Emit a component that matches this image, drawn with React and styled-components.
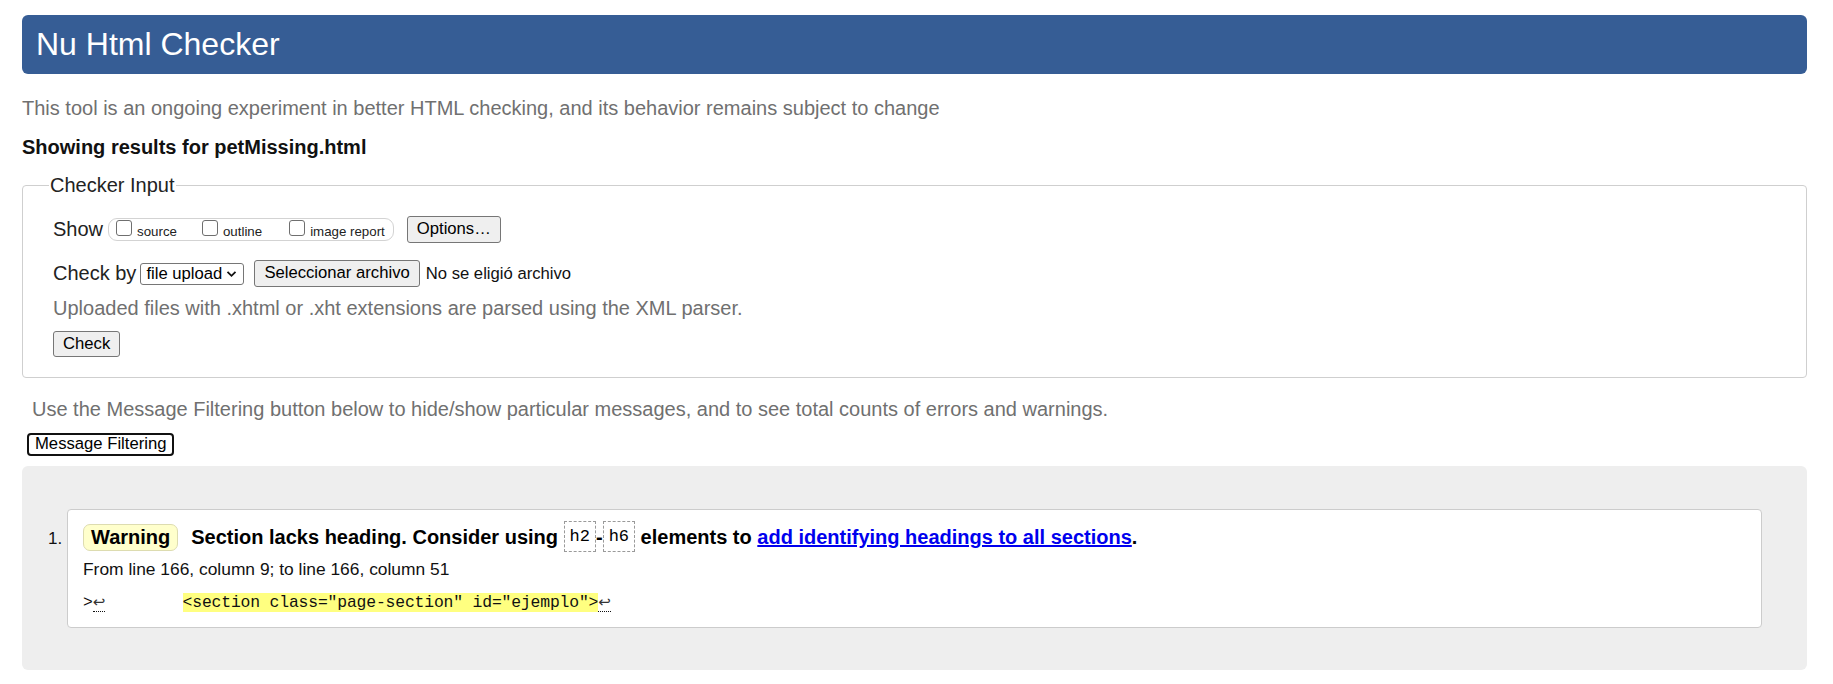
import React from "react";
import styled, { createGlobalStyle } from "styled-components";

const Global = createGlobalStyle`
  html, body { margin: 0; padding: 0; background: #fff; }
  body {
    font-family: "Liberation Sans", Arial, sans-serif;
    color: #222;
  }
  * { box-sizing: border-box; }
`;

const Page = styled.div`
  padding: 15px 26px 15px 22px;
  font-size: 20px;
`;

const Header = styled.h1`
  margin: 0;
  height: 59px;
  line-height: 59px;
  padding: 0 14px;
  background: #365d95;
  color: #fff;
  font-size: 32px;
  font-weight: normal;
  border-radius: 6px;
`;

const Intro = styled.p`
  margin: ${(p) => p.$mt ?? 23}px 0 0;
  color: #707070;
  font-size: 20px;
  line-height: 23px;
  padding-left: ${(p) => p.$indent || 0}px;
`;

const Showing = styled.h2`
  margin: 16px 0 0;
  font-size: 20px;
  line-height: 23px;
  font-weight: bold;
  color: #111;
`;

const Fieldset = styled.fieldset`
  margin: 15px 0 0;
  border: 1px solid #cfcfcf;
  border-radius: 4px;
  padding: 19px 20px 20px 30px;
`;

const Legend = styled.legend`
  font-size: 20px;
  line-height: 23px;
  padding: 0 1px;
  margin-left: -4px;
  color: #222;
`;

const Row = styled.div`
  display: flex;
  align-items: center;
  height: ${(p) => p.$h || 27}px;
  margin-top: ${(p) => p.$mt || 0}px;
`;

const Label = styled.span`
  font-size: 20px;
  color: #222;
  margin-right: ${(p) => p.$mr || 5}px;
`;

const Group = styled.div`
  display: flex;
  align-items: center;
  height: 23px;
  border: 1px solid #d3d3d3;
  border-radius: 9px;
  padding: 0 8px 0 7px;
  margin-right: 13px;
`;

const CheckItem = styled.label`
  display: flex;
  align-items: center;
  font-size: 13.3px;
  color: #222;
  margin-right: ${(p) => p.$mr || 0}px;
  padding-top: 3px;
`;

const Box = styled.span`
  width: 16px;
  height: 16px;
  border: 1px solid #6f6f6f;
  border-radius: 3px;
  background: #fff;
  margin-right: 5px;
  margin-top: -6px;
`;

const Button = styled.button`
  font-family: "Liberation Sans", Arial, sans-serif;
  font-size: 16.67px;
  color: #000;
  height: ${(p) => p.$h || 27}px;
  padding: 0 9px;
  background: #efefef;
  border: 1px solid #767676;
  border-radius: 3px;
  margin-right: ${(p) => p.$mr || 0}px;
  line-height: 1;
`;

const SelectBox = styled.div`
  display: flex;
  align-items: center;
  justify-content: space-between;
  width: 104px;
  height: 22px;
  border: 1px solid #767676;
  border-radius: 3px;
  padding: 0 6px 0 5px;
  font-size: 16.67px;
  color: #000;
  margin-right: 10px;
  background: #fff;
`;

const FileText = styled.span`
  font-size: 16.67px;
  color: #111;
  margin-left: 6px;
`;

const FilterButton = styled.button`
  margin-top: 12px;
  margin-left: 5px;
  height: 23px;
  padding: 0 6px;
  border: 2px solid #111;
  border-radius: 4px;
  background: #fff;
  font-family: "Liberation Sans", Arial, sans-serif;
  font-size: 16.67px;
  color: #000;
  line-height: 1;
`;

const Results = styled.div`
  margin-top: 10px;
  background: #eeeeee;
  border-radius: 6px;
  padding: 43px 45px 42px 45px;
`;

const List = styled.ol`
  margin: 0;
  padding: 0;
  list-style-position: outside;
`;

const Item = styled.li`
  background: #fff;
  border: 1px solid #cccccc;
  border-radius: 4px;
  padding: 12px 16px 14px 15px;
  font-size: 17px;
  color: #111;
`;

const MessageLine = styled.p`
  margin: 0;
  font-size: 20px;
  font-weight: bold;
  line-height: 30px;
  color: #000;
`;

const Badge = styled.span`
  display: inline-block;
  height: 27px;
  line-height: 25px;
  padding: 0 7px;
  background: #ffffcc;
  border: 1px solid #dddcb0;
  border-radius: 7px;
  vertical-align: middle;
  margin-right: 13px;
  margin-top: -3px;
`;

const Code = styled.code`
  display: inline-block;
  font-family: "Liberation Mono", "DejaVu Sans Mono", monospace;
  font-size: 17px;
  font-weight: normal;
  line-height: 25px;
  padding: 2px 5px;
  border: 1px dashed #9a9a9a;
  vertical-align: middle;
  margin-top: -4px;
`;

const Link = styled.a`
  color: #0000ee;
  text-decoration: underline;
`;

const Location = styled.p`
  margin: 7px 0 0;
  font-size: 17.4px;
  line-height: 20px;
  color: #111;
`;

const Extract = styled.p`
  margin: 13px 0 0;
  font-family: "Liberation Mono", "DejaVu Sans Mono", monospace;
  font-size: 16.4px;
  letter-spacing: -0.17px;
  line-height: 20px;
  white-space: pre;
  color: #111;
`;

const Lf = styled.abbr`
  text-decoration: none;
  border-bottom: 1px dotted #111;
  font-family: "DejaVu Sans", sans-serif;
  font-size: 15px;
  letter-spacing: 0;
  color: #333;
`;

const Mark = styled.b`
  font-weight: normal;
  background: #ffff80;
`;

function Chevron() {
  return (
    <svg width="11" height="8" viewBox="0 0 11 8">
      <path d="M1.5 1.8 L5.5 5.8 L9.5 1.8" fill="none" stroke="#111" strokeWidth="1.8" />
    </svg>
  );
}

export default function App() {
  return (
    <Page>
      <Global />
      <Header>Nu Html Checker</Header>
      <Intro>This tool is an ongoing experiment in better HTML checking, and its behavior remains subject to change</Intro>
      <Showing>Showing results for petMissing.html</Showing>
      <Fieldset>
        <Legend>Checker Input</Legend>
        <Row>
          <Label>Show</Label>
          <Group>
            <CheckItem $mr={25}><Box />source</CheckItem>
            <CheckItem $mr={27}><Box />outline</CheckItem>
            <CheckItem><Box />image report</CheckItem>
          </Group>
          <Button>Options…</Button>
        </Row>
        <Row $mt={17}>
          <Label $mr={4}>Check by</Label>
          <SelectBox>
            <span>file upload</span>
            <Chevron />
          </SelectBox>
          <Button>Seleccionar archivo</Button>
          <FileText>No se eligió archivo</FileText>
        </Row>
        <Intro $mt={10}>Uploaded files with .xhtml or .xht extensions are parsed using the XML parser.</Intro>
        <Row $mt={11} $h={26}>
          <Button $h={26}>Check</Button>
        </Row>
      </Fieldset>
      <Intro $indent={10} $mt={20}>
        Use the Message Filtering button below to hide/show particular messages, and to see total counts of errors and warnings.
      </Intro>
      <FilterButton>Message Filtering</FilterButton>
      <Results>
        <List>
          <Item>
            <MessageLine>
              <Badge>Warning</Badge>
              Section lacks heading. Consider using <Code>h2</Code>-<Code>h6</Code> elements to{" "}
              <Link href="#">add identifying headings to all sections</Link>.
            </MessageLine>
            <Location>From line 166, column 9; to line 166, column 51</Location>
            <Extract>
              {">"}<Lf title="Line break">↩</Lf>{"        "}<Mark>{'<section class="page-section" id="ejemplo">'}</Mark><Lf title="Line break">↩</Lf>
            </Extract>
          </Item>
        </List>
      </Results>
    </Page>
  );
}
